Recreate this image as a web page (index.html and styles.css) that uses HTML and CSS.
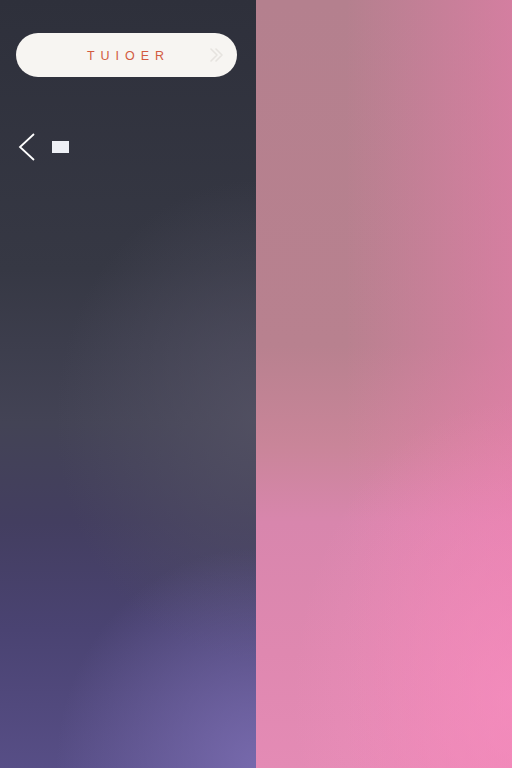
FILE: index.html
```html
<!DOCTYPE html>
<html>
<head>
<meta charset="utf-8">
<link rel="stylesheet" href="styles.css">
</head>
<body>
<div class="screen">
  <div class="left">
    <div class="pill">
      <span class="pill-text">TUIOER</span>
      <svg class="pill-icon" width="20" height="20" viewBox="0 0 20 20">
        <path d="M4 4 L10 10 L4 16 M9 4 L15 10 L9 16" fill="none" stroke="#e6e3df" stroke-width="1.6" stroke-linecap="round" stroke-linejoin="round"/>
      </svg>
    </div>
    <div class="nav">
      <svg class="back" width="18" height="28" viewBox="0 0 18 28">
        <path d="M16 1 L2 14 L16 27" fill="none" stroke="#ffffff" stroke-width="1.8"/>
      </svg>
      <div class="tag"></div>
    </div>
  </div>
  <div class="right"></div>
</div>
</body>
</html>
```
FILE: styles.css
```css
html, body {
  margin: 0;
  padding: 0;
}
body {
  font-family: "Liberation Sans", Arial, sans-serif;
}
.screen {
  display: flex;
  width: 512px;
  height: 768px;
}
.left {
  width: 256px;
  height: 768px;
  box-sizing: border-box;
  padding: 33px 0 0 16px;
  background:
    radial-gradient(ellipse 200px 220px at 256px 768px, rgba(122,108,176,0.9), rgba(122,108,176,0) 100%),
    radial-gradient(ellipse 200px 240px at 256px 420px, rgba(84,82,100,0.8), rgba(84,82,100,0) 100%),
    linear-gradient(to bottom, #2e303b 0%, #363844 35%, #434355 55%, #433e60 68%, #4a4372 82%, #574e86 100%);
}
.pill {
  width: 221px;
  height: 44px;
  border-radius: 22px;
  background: #f7f5f2;
  display: flex;
  align-items: center;
  justify-content: center;
  position: relative;
}
.pill-text {
  color: #d25a40;
  font-size: 12.5px;
  letter-spacing: 6px;
  margin-left: 4px;
  padding-top: 1px;
}
.pill-icon {
  position: absolute;
  right: 10px;
  top: 12px;
}
.nav {
  display: flex;
  align-items: center;
  gap: 16px;
  margin-top: 56px;
  padding-left: 2px;
}
.back {
  display: block;
}
.tag {
  width: 17px;
  height: 12px;
  background: #eef0f6;
}
.right {
  width: 256px;
  height: 768px;
  background:
    radial-gradient(ellipse 220px 300px at 256px 700px, rgba(250,145,195,0.6), rgba(250,145,195,0) 100%),
    linear-gradient(to right, rgba(230,120,165,0) 0%, rgba(230,120,165,0) 35%, rgba(238,125,175,0.55) 100%),
    linear-gradient(to bottom, #b4808e 0%, #b8818f 45%, #c98599 58%, #d886ad 68%, #df88b0 85%, #e48bb5 100%);
}
```
